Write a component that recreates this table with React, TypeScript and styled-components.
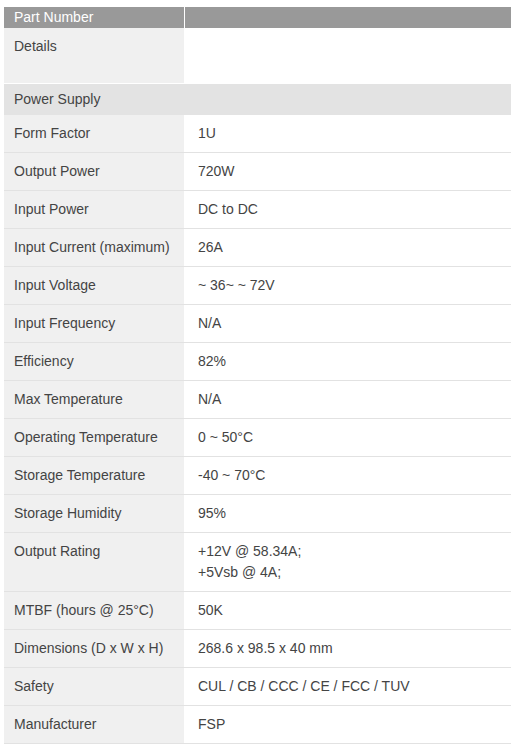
import React from "react";
import styled, { createGlobalStyle } from "styled-components";

const Global = createGlobalStyle`
  html, body { margin: 0; padding: 0; background: #fff; }
  body { font-family: "Liberation Sans", Arial, sans-serif; font-size: 14px; color: #444; }
`;

const Page = styled.div`
  padding: 7px 0 0 4px;
`;

const Table = styled.div`
  display: flex;
  flex-direction: column;
  width: 507px;
`;

const HeaderRow = styled.div`
  display: flex;
  height: 21px;
  line-height: 21px;
  color: #fff;
`;

const HeaderCell = styled.div<{ $label?: boolean }>`
  background: #999;
  padding: 0 10px;
  ${(p) => (p.$label ? "width: 180px; box-sizing: border-box; margin-right: 1px;" : "flex: 1;")}
`;

const Row = styled.div<{ $border?: string }>`
  display: flex;
  border-bottom: 1px solid ${(p) => p.$border ?? "#e2e2e2"};
  line-height: 21px;
`;

const Label = styled.div<{ $minH?: number }>`
  width: 180px;
  box-sizing: border-box;
  background: #f0f0f0;
  padding: 8px 10px;
  ${(p) => (p.$minH ? `min-height: ${p.$minH}px;` : "")}
`;

const Value = styled.div`
  flex: 1;
  padding: 8px 14px;
`;

const Section = styled.div`
  background: #e3e3e3;
  padding: 5px 10px;
  line-height: 21px;
`;

const specs: [string, React.ReactNode][] = [
  ["Form Factor", "1U"],
  ["Output Power", "720W"],
  ["Input Power", "DC to DC"],
  ["Input Current (maximum)", "26A"],
  ["Input Voltage", "~ 36~ ~ 72V"],
  ["Input Frequency", "N/A"],
  ["Efficiency", "82%"],
  ["Max Temperature", "N/A"],
  ["Operating Temperature", "0 ~ 50°C"],
  ["Storage Temperature", "-40 ~ 70°C"],
  ["Storage Humidity", "95%"],
  [
    "Output Rating",
    <>
      +12V @ 58.34A;
      <br />
      +5Vsb @ 4A;
    </>,
  ],
  ["MTBF (hours @ 25°C)", "50K"],
  ["Dimensions (D x W x H)", "268.6 x 98.5 x 40 mm"],
  ["Safety", "CUL / CB / CCC / CE / FCC / TUV"],
  ["Manufacturer", "FSP"],
];

export default function App() {
  return (
    <>
      <Global />
      <Page>
        <Table>
          <HeaderRow>
            <HeaderCell $label>Part Number</HeaderCell>
            <HeaderCell />
          </HeaderRow>
          <Row $border="#fff">
            <Label $minH={55}>Details</Label>
            <Value />
          </Row>
          <Section>Power Supply</Section>
          {specs.map(([k, v]) => (
            <Row key={k}>
              <Label>{k}</Label>
              <Value>{v}</Value>
            </Row>
          ))}
        </Table>
      </Page>
    </>
  );
}
